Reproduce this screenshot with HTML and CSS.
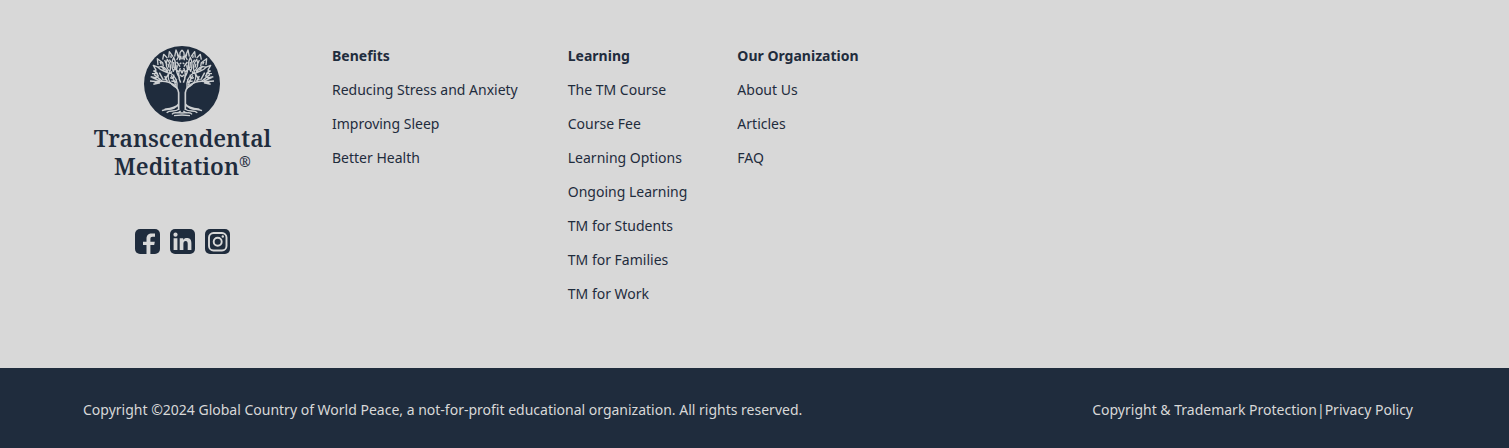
FILE: index.html
```html
<!DOCTYPE html>
<html lang="en">
<head>
<meta charset="utf-8">
<meta name="viewport" content="width=device-width, initial-scale=1">
<title>Transcendental Meditation</title>
<link rel="stylesheet" href="styles.css">
</head>
<body>
<footer>
  <div class="footer-main">
    <div class="brand">
      <a class="logo" href="#">
        <svg class="tree" viewBox="14 12 228 228" aria-hidden="true">
          <circle cx="128" cy="126" r="114" fill="#1f2c3d"/>
          <defs>
            <g id="half">
              <path stroke-width="5" d="M118 204V152C116 139 104 127 88 121C76 117 60 116 46 123M118 152V186C112 197 94 200 76 202"/>
              <path stroke-width="4.500" d="M58 119L32 117M62 117L38 106M68 117L44 97M62 122L42 127M52 108L34 104M58 104L46 84M72 114L60 92M76 114L88 96M84 118L76 102"/>
              <path d="M68 206C84 198 98 206 108 196M82 212C92 202 106 212 118 202M98 217C104 207 114 218 124 207M104 221L128 219M112 212L128 213"/>
              <path d="M113 138C90 126 82 108 90 90C108 102 116 118 113 138ZM109 130C106 114 100 106 95 100M92 107L102 111M96 117L106 119M104 98L101 111M112 112L108 122"/>
              <path stroke-width="4.500" d="M124 122C117 108 115 94 123 78M121 108C112 94 109 86 114 70M119 90L106 80M122 74L112 60M124 84L128 94M122 98L128 104"/>
              <path d="M86 93C74 85 66 88 56 76C70 70 82 79 86 93ZM92 88C78 78 78 67 84 52C95 66 96 75 92 88ZM102 88C96 72 96 60 103 46C111 62 110 76 102 88Z"/>
              <path d="M51 86L42 70L58 76M56 69L54 50L70 62L72 73M70 53L73 37L84 48M88 47L90 29L101 44M106 44L110 24L118 43L112 54M121 55L122 32L128 24M121 66L126 62M62 59L66 67M90 53L96 62M114 34L115 43M42 86L54 94L38 95M78 87L86 86M69 80L78 84M86 65L89 77M103 60L104 78M64 72L74 80M76 54L80 64M94 40L96 48M124 42L126 52M98 88L94 94M110 70L107 80"/>
            </g>
          </defs>
          <g fill="none" stroke="#cdd0d2" stroke-width="4" stroke-linejoin="round">
            <use href="#half"/>
            <use href="#half" transform="translate(256 0) scale(-1 1)"/>
          </g>
        </svg>
        <span class="wordmark"><span>Transcendental</span><span class="second">Meditation<span class="reg">®</span></span></span>
      </a>
      <div class="social">
        <a href="#" aria-label="Facebook"><svg viewBox="0 0 25 25"><rect width="25" height="25" rx="5" fill="#1f2c3d"/><path fill="#d8d8d8" d="M11.500 25v-9H8v-3.300h3.500V9.800C11.500 6.300 13.500 4.500 16.800 4.500H20v3.300h-2.400c-1.600 0-2.200.7-2.200 2.200v2.700h4.400l-.6 3.300h-3.800v9z"/></svg></a>
        <a href="#" aria-label="LinkedIn"><svg viewBox="0 0 25 25"><rect width="25" height="25" rx="5" fill="#1f2c3d"/><g fill="#d8d8d8"><circle cx="5.500" cy="5.700" r="2.100"/><path d="M3.600 9.300h3.800V21H3.600zM9.700 9.300h3.500v1.600c.8-1.300 2-1.900 3.600-1.900 3.600 0 4.600 2.200 4.600 5.400V21h-3.700v-6c0-1.800-.5-2.900-2-2.900-1.700 0-2.300 1.100-2.300 3V21H9.700z"/></g></svg></a>
        <a href="#" aria-label="Instagram"><svg viewBox="0 0 25 25"><rect width="25" height="25" rx="5" fill="#1f2c3d"/><g fill="none" stroke="#d8d8d8" stroke-width="1.900"><rect x="4" y="4" width="17.500" height="17.500" rx="4.500"/><circle cx="12.700" cy="12.700" r="4"/></g><circle cx="17.800" cy="7.500" r="1.200" fill="#d8d8d8"/></svg></a>
      </div>
    </div>
    <nav class="links" aria-label="Footer">
      <ul>
        <li class="heading">Benefits</li>
        <li><a href="#">Reducing Stress and Anxiety</a></li>
        <li><a href="#">Improving Sleep</a></li>
        <li><a href="#">Better Health</a></li>
      </ul>
      <ul>
        <li class="heading">Learning</li>
        <li><a href="#">The TM Course</a></li>
        <li><a href="#">Course Fee</a></li>
        <li><a href="#">Learning Options</a></li>
        <li><a href="#">Ongoing Learning</a></li>
        <li><a href="#">TM for Students</a></li>
        <li><a href="#">TM for Families</a></li>
        <li><a href="#">TM for Work</a></li>
      </ul>
      <ul>
        <li class="heading">Our Organization</li>
        <li><a href="#">About Us</a></li>
        <li><a href="#">Articles</a></li>
        <li><a href="#">FAQ</a></li>
      </ul>
    </nav>
  </div>
  <div class="footer-legal">
    <p>Copyright ©2024 Global Country of World Peace, a not-for-profit educational organization. All rights reserved.</p>
    <p><a href="#">Copyright &amp; Trademark Protection</a>|<a href="#">Privacy Policy</a></p>
  </div>
</footer>
</body>
</html>
```
FILE: styles.css
```css
* { box-sizing: border-box; }

body {
  margin: 0;
  background: #d8d8d8;
  color: #1f2c3d;
  font: 14px/20px "Noto Sans", "Open Sans", sans-serif;
}

a { color: inherit; text-decoration: none; }

ul { margin: 0; padding: 0; list-style: none; }

p { margin: 0; }

svg { display: block; }

.footer-main {
  display: flex;
  gap: 50px;
  padding: 46px 96px 64px 83px;
}

.brand {
  display: flex;
  flex-direction: column;
  align-items: center;
  flex: 0 0 199px;
  gap: 49px;
}

.logo {
  display: flex;
  flex-direction: column;
  align-items: center;
  gap: 2px;
}

.tree { width: 76px; height: 76px; }

.wordmark {
  display: flex;
  flex-direction: column;
  align-items: center;
  font: 600 23px/28px "Noto Serif", "Liberation Serif", serif;
}

.second { display: flex; }

.reg {
  font-size: 14px;
  font-weight: normal;
  line-height: 20px;
}

.social { display: flex; gap: 10px; }

.social svg { width: 25px; height: 25px; }

.links { display: flex; gap: 50px; }

.links ul {
  display: flex;
  flex-direction: column;
  gap: 14px;
}

.heading { font-weight: bold; }

.footer-legal {
  display: flex;
  justify-content: space-between;
  gap: 24px;
  padding: 32px 96px 28px 83px;
  background: #1f2c3d;
  color: #d8d8d8;
}
```
